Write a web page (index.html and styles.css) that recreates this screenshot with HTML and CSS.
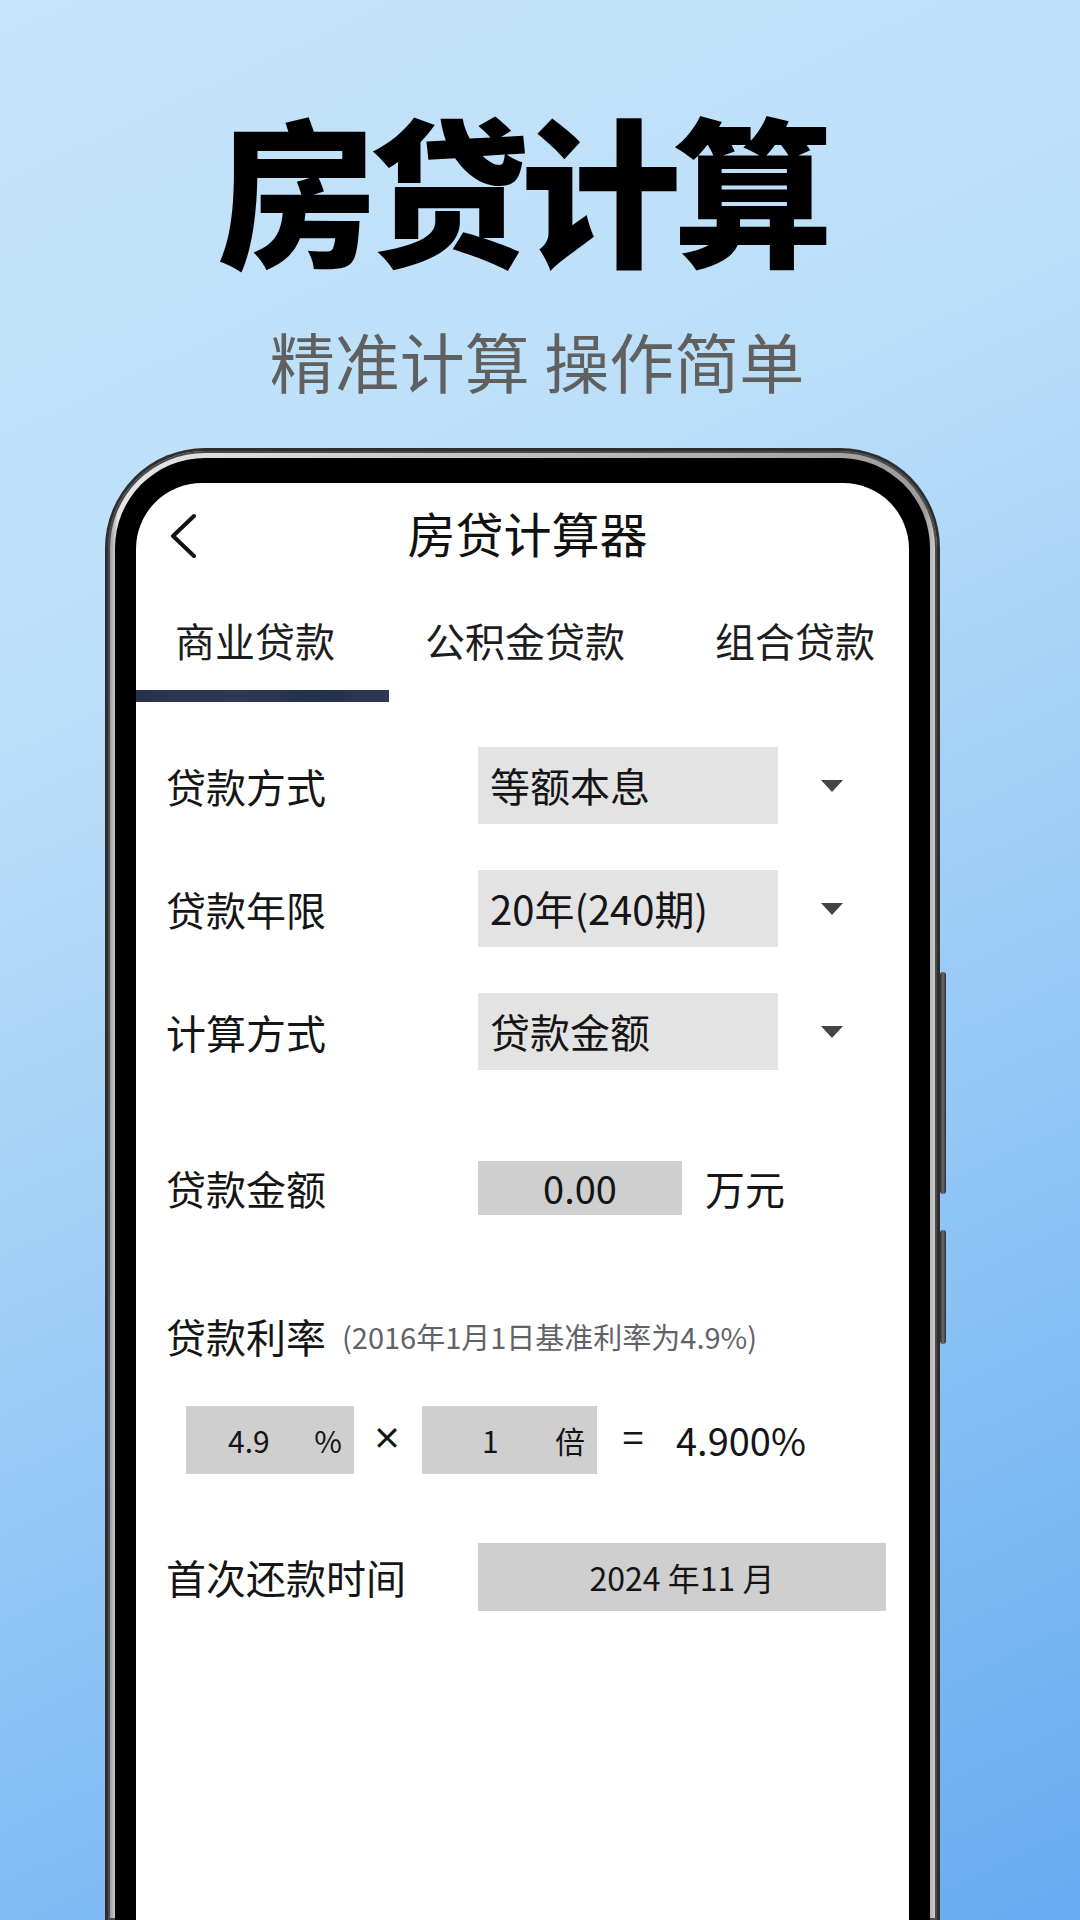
FILE: index.html
```html
<!DOCTYPE html>
<html lang="zh-CN">
<head>
<meta charset="utf-8">
<title>房贷计算</title>
<link rel="stylesheet" href="styles.css">
</head>
<body>
<div class="page">
  <h1 class="hero-title">房贷计算</h1>
  <p class="hero-sub">精准计算 操作简单</p>

  <div class="phone">
    <span class="side-btn btn-a"></span>
    <span class="side-btn btn-b"></span>
    <div class="bezel">
      <div class="screen">
        <div class="app-header">
          <div class="back">
            <svg width="30" height="46" viewBox="0 0 30 46"><path d="M25 3 L4 23 L25 43" fill="none" stroke="#111" stroke-width="4" stroke-linecap="round" stroke-linejoin="round"/></svg>
          </div>
          <div class="app-title">房贷计算器</div>
          <div></div>
        </div>

        <div class="tabs">
          <div class="tab">商业贷款</div>
          <div class="tab">公积金贷款</div>
          <div class="tab">组合贷款</div>
        </div>
        <div class="tab-indicator"></div>

        <div class="form">
          <div class="row row-select">
            <div class="label">贷款方式</div>
            <div class="select">等额本息</div>
            <span class="caret"></span>
          </div>
          <div class="row row-select">
            <div class="label">贷款年限</div>
            <div class="select">20年(240期)</div>
            <span class="caret"></span>
          </div>
          <div class="row row-select">
            <div class="label">计算方式</div>
            <div class="select">贷款金额</div>
            <span class="caret"></span>
          </div>

          <div class="row row-amount">
            <div class="label">贷款金额</div>
            <div class="input amount">0.00</div>
            <div class="unit">万元</div>
          </div>

          <div class="rate-label">
            <span class="label-inline">贷款利率</span>
            <span class="hint">(2016年1月1日基准利率为4.9%)</span>
          </div>

          <div class="rate-row">
            <div class="input rate-box box-a"><span class="num">4.9</span><span class="suffix">%</span></div>
            <span class="op times">×</span>
            <div class="input rate-box box-b"><span class="num">1</span><span class="suffix">倍</span></div>
            <span class="op equals">=</span>
            <span class="result">4.900%</span>
          </div>

          <div class="row row-date">
            <div class="label">首次还款时间</div>
            <div class="input date">2024 年11 月</div>
          </div>
        </div>
      </div>
    </div>
  </div>
</div>
</body>
</html>
```

FILE: styles.css
```css
* { box-sizing: border-box; }

html, body {
  margin: 0;
  padding: 0;
}

body {
  width: 1080px;
  height: 1920px;
  overflow: hidden;
  font-family: "Noto Sans CJK SC", "Noto Sans", sans-serif;
  background: linear-gradient(155deg, #c6e4fa 0%, #bcdff9 30%, #92c7f6 65%, #67abf1 100%);
}

.page {
  width: 1080px;
  height: 1920px;
  padding-top: 105px;
}

.hero-title {
  margin: 0;
  height: 160px;
  font-size: 160px;
  line-height: 160px;
  font-weight: 900;
  letter-spacing: -8px;
  text-align: center;
  color: #000;
  padding-right: 38px;
}

.hero-sub {
  margin: 62px 0 0 0;
  height: 66px;
  font-size: 65px;
  line-height: 66px;
  font-weight: 400;
  color: #606060;
  text-align: center;
  padding-right: 6px;
}

/* phone frame */
.phone {
  position: relative;
  margin: 55px 0 0 105px;
  width: 835px;
  height: 1472px;
  border: 3px solid #2e2e2e;
  border-bottom: 0;
  border-radius: 100px 100px 0 0;
  padding: 7px 7px 0 7px;
  background: linear-gradient(90deg, #8a8a8a, #e6e6e6 1.2%, #9c9c9c 98.5%, #d5d5d5);
  box-shadow: inset 0 0 0 2px #4a4a4a;
}

.side-btn {
  position: absolute;
  right: -9px;
  width: 6px;
  border-radius: 3px;
  background: linear-gradient(90deg, #2f2f2f, #6b6b6b 50%, #2f2f2f);
}
.btn-a { top: 521px; height: 222px; }
.btn-b { top: 779px; height: 114px; }

.bezel {
  height: 100%;
  background: #000;
  border-radius: 90px 90px 0 0;
  padding: 25px 21px 0 21px;
}

.screen {
  height: 100%;
  background: #fff;
  border-radius: 66px 66px 0 0;
  color: #151515;
}

/* header */
.app-header {
  height: 100px;
  display: grid;
  grid-template-columns: 1fr auto 1fr;
  align-items: center;
  padding-left: 10px;
}

.back {
  padding-left: 23px;
  padding-top: 6px;
  display: flex;
  align-items: center;
}

.app-title {
  font-size: 48px;
  line-height: 48px;
  color: #111;
  margin-top: -2px;
}

/* tabs */
.tabs {
  display: flex;
  gap: 90px;
  padding: 37px 0 0 39px;
  height: 107px;
}

.tab {
  font-size: 40px;
  line-height: 40px;
  color: #1d1d1d;
}

.tab-indicator {
  width: 253px;
  height: 12px;
  background: linear-gradient(90deg, #26324a, #2f3b55 40%, #233049 70%, #2d3953);
}

/* form */
.form {
  padding-left: 30px;
  padding-top: 45px;
}

.row {
  display: flex;
  align-items: center;
}

.label {
  width: 312px;
  font-size: 40px;
  line-height: 48px;
  color: #151515;
}

.row-select {
  height: 77px;
  margin-bottom: 46px;
}
.row-select:nth-child(3) { margin-bottom: 0; }

.select {
  width: 300px;
  height: 77px;
  background: #e3e3e3;
  padding-left: 12px;
  font-size: 40px;
  line-height: 77px;
  color: #151515;
}

.caret {
  margin-left: 43px;
  width: 0;
  height: 0;
  border-left: 11px solid transparent;
  border-right: 11px solid transparent;
  border-top: 12px solid #454545;
}

.input {
  background: #cfcfcf;
  color: #141414;
}

.row-amount {
  margin-top: 91px;
  height: 54px;
}

.amount {
  width: 204px;
  height: 54px;
  font-size: 38px;
  line-height: 54px;
  text-align: center;
}

.unit {
  margin-left: 23px;
  font-size: 40px;
  line-height: 48px;
}

.rate-label {
  margin-top: 97px;
  height: 48px;
  display: flex;
  align-items: center;
}

.label-inline {
  font-size: 40px;
  line-height: 48px;
  color: #151515;
}

.hint {
  margin-left: 16px;
  font-size: 29px;
  line-height: 48px;
  color: #5f6368;
}

.rate-row {
  margin-top: 46px;
  height: 68px;
  display: flex;
  align-items: center;
  padding-left: 20px;
}

.rate-box {
  height: 68px;
  display: flex;
  align-items: center;
  font-size: 30px;
  line-height: 68px;
}

.box-a { width: 168px; padding-left: 42px; }
.box-b { width: 175px; padding-left: 60px; }

.rate-box .suffix {
  margin-left: auto;
  padding-right: 12px;
}

.op {
  line-height: 68px;
  color: #151515;
  display: flex;
  justify-content: center;
}
.times {
  width: 18px;
  font-size: 30px;
  font-weight: 700;
  margin: -8px 26px 0 24px;
}
.equals {
  width: 18px;
  font-size: 38px;
  margin: -8px 0 0 27px;
}

.result {
  margin-left: 34px;
  font-size: 38px;
  line-height: 68px;
  color: #151515;
}

.row-date {
  margin-top: 69px;
  height: 68px;
}

.date {
  width: 408px;
  height: 68px;
  font-size: 32px;
  line-height: 68px;
  text-align: center;
}
```
